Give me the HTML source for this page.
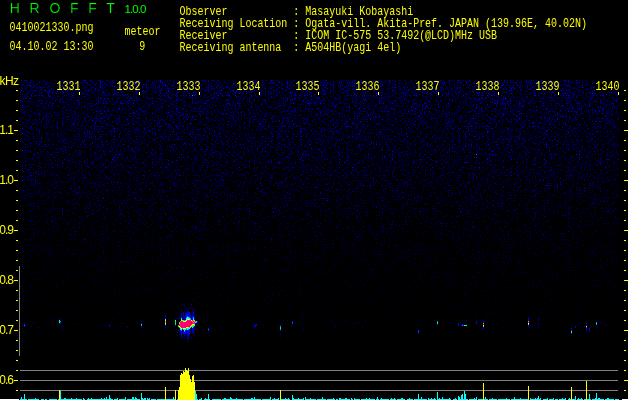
<!DOCTYPE html>
<html><head><meta charset="utf-8"><title>HROFFT 1.0.0</title>
<style>html,body{margin:0;padding:0;background:#000;overflow:hidden}svg{display:block}
.m{font-family:"Liberation Mono",monospace;font-size:13px;fill:#ff0;white-space:pre}
.s{font-family:"Liberation Sans",sans-serif;fill:#ff0}
</style></head>
<body>
<svg width="629" height="400" viewBox="0 0 629 400">
<rect width="629" height="400" fill="#000"/>
<defs><linearGradient id="dg" x1="0" y1="80" x2="0" y2="400" gradientUnits="userSpaceOnUse"><stop offset="0.0000" stop-color="rgb(125,125,125)"/><stop offset="0.1250" stop-color="rgb(120,120,120)"/><stop offset="0.3125" stop-color="rgb(111,111,111)"/><stop offset="0.4062" stop-color="rgb(104,104,104)"/><stop offset="0.5000" stop-color="rgb(95,95,95)"/><stop offset="0.5938" stop-color="rgb(88,88,88)"/><stop offset="0.6875" stop-color="rgb(80,80,80)"/><stop offset="0.7812" stop-color="rgb(73,73,73)"/><stop offset="0.8750" stop-color="rgb(51,51,51)"/></linearGradient>
<filter id="nz" x="0" y="0" width="100%" height="100%" filterUnits="objectBoundingBox" color-interpolation-filters="sRGB"><feTurbulence type="fractalNoise" baseFrequency="1.37 1.61" numOctaves="1" seed="5" result="t"/><feColorMatrix in="t" type="matrix" values="1 0 0 0 0  0 1 0 0 0  0 0 1 0 0  0 0 0 0 1" result="t1"/><feComposite in="t1" in2="SourceGraphic" operator="arithmetic" k1="0" k2="1" k3="1" k4="-1" result="v"/><feColorMatrix in="v" type="matrix" values="0 0 0 0 0  1 0 0 0 0  1 0 0 0 0  0 0 0 0 1"/><feComponentTransfer><feFuncR type="discrete" tableValues="0"/><feFuncG type="discrete" tableValues="0 0 0 0 0 0 0 0 0 0 0 0 0 0 0 0.5 0.5 1 1 1 1 1 1 1 1 1 1 1 1 1 1 1 1 1 1 1 1 1 1 1 1 1 1 1 1 1 1 1 1 1"/><feFuncB type="discrete" tableValues="0 0.22 0.22 0.22 0.3 0.3 0.4 0.5 0.62 0.75 0.88 1 1 1 1 1 1 1 1 1 1 1 1 1 1 1 1 1 1 1 1 1 1 1 1 1 1 1 1 1 1 1 1 1 1 1 1 1 1 1 1"/></feComponentTransfer></filter></defs>
<rect x="20" y="80" width="599" height="319" fill="url(#dg)" filter="url(#nz)"/>
<g shape-rendering="crispEdges">
<rect x="16" y="90" width="2" height="1" fill="#ffff00"/><rect x="624" y="90" width="2" height="1" fill="#ffff00"/><rect x="16" y="100" width="2" height="1" fill="#ffff00"/><rect x="624" y="100" width="2" height="1" fill="#ffff00"/><rect x="16" y="110" width="2" height="1" fill="#ffff00"/><rect x="624" y="110" width="2" height="1" fill="#ffff00"/><rect x="16" y="120" width="2" height="1" fill="#ffff00"/><rect x="624" y="120" width="2" height="1" fill="#ffff00"/><rect x="14" y="130" width="4" height="1" fill="#ffff00"/><rect x="624" y="130" width="5" height="1" fill="#ffff00"/><rect x="16" y="140" width="2" height="1" fill="#ffff00"/><rect x="624" y="140" width="2" height="1" fill="#ffff00"/><rect x="16" y="150" width="2" height="1" fill="#ffff00"/><rect x="624" y="150" width="2" height="1" fill="#ffff00"/><rect x="16" y="160" width="2" height="1" fill="#ffff00"/><rect x="624" y="160" width="2" height="1" fill="#ffff00"/><rect x="16" y="170" width="2" height="1" fill="#ffff00"/><rect x="624" y="170" width="2" height="1" fill="#ffff00"/><rect x="14" y="180" width="4" height="1" fill="#ffff00"/><rect x="624" y="180" width="5" height="1" fill="#ffff00"/><rect x="16" y="190" width="2" height="1" fill="#ffff00"/><rect x="624" y="190" width="2" height="1" fill="#ffff00"/><rect x="16" y="200" width="2" height="1" fill="#ffff00"/><rect x="624" y="200" width="2" height="1" fill="#ffff00"/><rect x="16" y="210" width="2" height="1" fill="#ffff00"/><rect x="624" y="210" width="2" height="1" fill="#ffff00"/><rect x="16" y="220" width="2" height="1" fill="#ffff00"/><rect x="624" y="220" width="2" height="1" fill="#ffff00"/><rect x="14" y="230" width="4" height="1" fill="#ffff00"/><rect x="624" y="230" width="5" height="1" fill="#ffff00"/><rect x="16" y="240" width="2" height="1" fill="#ffff00"/><rect x="624" y="240" width="2" height="1" fill="#ffff00"/><rect x="16" y="250" width="2" height="1" fill="#ffff00"/><rect x="624" y="250" width="2" height="1" fill="#ffff00"/><rect x="16" y="260" width="2" height="1" fill="#ffff00"/><rect x="624" y="260" width="2" height="1" fill="#ffff00"/><rect x="16" y="270" width="2" height="1" fill="#ffff00"/><rect x="624" y="270" width="2" height="1" fill="#ffff00"/><rect x="14" y="280" width="4" height="1" fill="#ffff00"/><rect x="624" y="280" width="5" height="1" fill="#ffff00"/><rect x="16" y="290" width="2" height="1" fill="#ffff00"/><rect x="624" y="290" width="2" height="1" fill="#ffff00"/><rect x="16" y="300" width="2" height="1" fill="#ffff00"/><rect x="624" y="300" width="2" height="1" fill="#ffff00"/><rect x="16" y="310" width="2" height="1" fill="#ffff00"/><rect x="624" y="310" width="2" height="1" fill="#ffff00"/><rect x="16" y="320" width="2" height="1" fill="#ffff00"/><rect x="624" y="320" width="2" height="1" fill="#ffff00"/><rect x="14" y="330" width="4" height="1" fill="#ffff00"/><rect x="624" y="330" width="5" height="1" fill="#ffff00"/><rect x="16" y="340" width="2" height="1" fill="#ffff00"/><rect x="624" y="340" width="2" height="1" fill="#ffff00"/><rect x="16" y="350" width="2" height="1" fill="#ffff00"/><rect x="624" y="350" width="2" height="1" fill="#ffff00"/><rect x="16" y="360" width="2" height="1" fill="#ffff00"/><rect x="624" y="360" width="2" height="1" fill="#ffff00"/><rect x="16" y="370" width="2" height="1" fill="#ffff00"/><rect x="624" y="370" width="2" height="1" fill="#ffff00"/><rect x="14" y="380" width="4" height="1" fill="#ffff00"/><rect x="624" y="380" width="5" height="1" fill="#ffff00"/><rect x="16" y="390" width="2" height="1" fill="#ffff00"/><rect x="624" y="390" width="2" height="1" fill="#ffff00"/>
<rect x="595" y="80" width="24" height="11" fill="#000"/><rect x="79" y="92" width="1" height="3" fill="#ffff00"/><rect x="139" y="92" width="1" height="3" fill="#ffff00"/><rect x="199" y="92" width="1" height="3" fill="#ffff00"/><rect x="259" y="92" width="1" height="3" fill="#ffff00"/><rect x="318" y="92" width="1" height="3" fill="#ffff00"/><rect x="378" y="92" width="1" height="3" fill="#ffff00"/><rect x="438" y="92" width="1" height="3" fill="#ffff00"/><rect x="498" y="92" width="1" height="3" fill="#ffff00"/><rect x="558" y="92" width="1" height="3" fill="#ffff00"/><rect x="618" y="92" width="1" height="3" fill="#ffff00"/>
<rect x="20" y="370" width="598" height="1" fill="#808080"/><rect x="20" y="380" width="598" height="1" fill="#808080"/><rect x="20" y="390" width="598" height="1" fill="#808080"/><rect x="19" y="266" width="1" height="90" fill="#808080"/><rect x="0" y="399" width="19" height="1" fill="#fff"/><rect x="622" y="399" width="7" height="1" fill="#fff"/><rect x="628" y="0" width="1" height="400" fill="#fff"/>
</g>
<g shape-rendering="crispEdges">
<rect x="20" y="399" width="7" height="1" fill="#00ffff"/><rect x="28" y="399" width="8" height="1" fill="#00ffff"/><rect x="36" y="399" width="3" height="1" fill="#00ffff"/><rect x="41" y="399" width="3" height="1" fill="#00ffff"/><rect x="45" y="399" width="2" height="1" fill="#00ffff"/><rect x="49" y="399" width="5" height="1" fill="#00ffff"/><rect x="54" y="399" width="3" height="1" fill="#00ffff"/><rect x="58" y="399" width="8" height="1" fill="#00ffff"/><rect x="66" y="399" width="5" height="1" fill="#00ffff"/><rect x="71" y="399" width="8" height="1" fill="#00ffff"/><rect x="79" y="399" width="3" height="1" fill="#00ffff"/><rect x="83" y="399" width="2" height="1" fill="#00ffff"/><rect x="87" y="399" width="8" height="1" fill="#00ffff"/><rect x="95" y="399" width="5" height="1" fill="#00ffff"/><rect x="100" y="399" width="4" height="1" fill="#00ffff"/><rect x="105" y="399" width="8" height="1" fill="#00ffff"/><rect x="114" y="399" width="3" height="1" fill="#00ffff"/><rect x="119" y="399" width="6" height="1" fill="#00ffff"/><rect x="127" y="399" width="4" height="1" fill="#00ffff"/><rect x="131" y="399" width="5" height="1" fill="#00ffff"/><rect x="137" y="399" width="3" height="1" fill="#00ffff"/><rect x="142" y="399" width="3" height="1" fill="#00ffff"/><rect x="147" y="399" width="2" height="1" fill="#00ffff"/><rect x="151" y="399" width="5" height="1" fill="#00ffff"/><rect x="157" y="399" width="8" height="1" fill="#00ffff"/><rect x="166" y="399" width="9" height="1" fill="#00ffff"/><rect x="177" y="399" width="9" height="1" fill="#00ffff"/><rect x="187" y="399" width="6" height="1" fill="#00ffff"/><rect x="194" y="399" width="4" height="1" fill="#00ffff"/><rect x="199" y="399" width="3" height="1" fill="#00ffff"/><rect x="204" y="399" width="6" height="1" fill="#00ffff"/><rect x="212" y="399" width="9" height="1" fill="#00ffff"/><rect x="222" y="399" width="9" height="1" fill="#00ffff"/><rect x="232" y="399" width="3" height="1" fill="#00ffff"/><rect x="235" y="399" width="8" height="1" fill="#00ffff"/><rect x="244" y="399" width="7" height="1" fill="#00ffff"/><rect x="252" y="399" width="9" height="1" fill="#00ffff"/><rect x="262" y="399" width="2" height="1" fill="#00ffff"/><rect x="264" y="399" width="7" height="1" fill="#00ffff"/><rect x="272" y="399" width="7" height="1" fill="#00ffff"/><rect x="281" y="399" width="9" height="1" fill="#00ffff"/><rect x="292" y="399" width="9" height="1" fill="#00ffff"/><rect x="301" y="399" width="3" height="1" fill="#00ffff"/><rect x="305" y="399" width="9" height="1" fill="#00ffff"/><rect x="314" y="399" width="2" height="1" fill="#00ffff"/><rect x="317" y="399" width="9" height="1" fill="#00ffff"/><rect x="327" y="399" width="8" height="1" fill="#00ffff"/><rect x="336" y="399" width="2" height="1" fill="#00ffff"/><rect x="339" y="399" width="7" height="1" fill="#00ffff"/><rect x="347" y="399" width="3" height="1" fill="#00ffff"/><rect x="351" y="399" width="2" height="1" fill="#00ffff"/><rect x="354" y="399" width="6" height="1" fill="#00ffff"/><rect x="361" y="399" width="5" height="1" fill="#00ffff"/><rect x="367" y="399" width="8" height="1" fill="#00ffff"/><rect x="376" y="399" width="3" height="1" fill="#00ffff"/><rect x="380" y="399" width="9" height="1" fill="#00ffff"/><rect x="390" y="399" width="6" height="1" fill="#00ffff"/><rect x="397" y="399" width="8" height="1" fill="#00ffff"/><rect x="407" y="399" width="6" height="1" fill="#00ffff"/><rect x="414" y="399" width="7" height="1" fill="#00ffff"/><rect x="422" y="399" width="5" height="1" fill="#00ffff"/><rect x="428" y="399" width="3" height="1" fill="#00ffff"/><rect x="432" y="399" width="4" height="1" fill="#00ffff"/><rect x="437" y="399" width="5" height="1" fill="#00ffff"/><rect x="442" y="399" width="9" height="1" fill="#00ffff"/><rect x="453" y="399" width="4" height="1" fill="#00ffff"/><rect x="458" y="399" width="6" height="1" fill="#00ffff"/><rect x="464" y="399" width="4" height="1" fill="#00ffff"/><rect x="469" y="399" width="7" height="1" fill="#00ffff"/><rect x="478" y="399" width="7" height="1" fill="#00ffff"/><rect x="486" y="399" width="2" height="1" fill="#00ffff"/><rect x="489" y="399" width="8" height="1" fill="#00ffff"/><rect x="498" y="399" width="8" height="1" fill="#00ffff"/><rect x="507" y="399" width="3" height="1" fill="#00ffff"/><rect x="511" y="399" width="8" height="1" fill="#00ffff"/><rect x="519" y="399" width="5" height="1" fill="#00ffff"/><rect x="524" y="399" width="5" height="1" fill="#00ffff"/><rect x="530" y="399" width="4" height="1" fill="#00ffff"/><rect x="534" y="399" width="7" height="1" fill="#00ffff"/><rect x="543" y="399" width="2" height="1" fill="#00ffff"/><rect x="545" y="399" width="2" height="1" fill="#00ffff"/><rect x="549" y="399" width="4" height="1" fill="#00ffff"/><rect x="555" y="399" width="3" height="1" fill="#00ffff"/><rect x="559" y="399" width="2" height="1" fill="#00ffff"/><rect x="561" y="399" width="5" height="1" fill="#00ffff"/><rect x="568" y="399" width="8" height="1" fill="#00ffff"/><rect x="577" y="399" width="6" height="1" fill="#00ffff"/><rect x="584" y="399" width="7" height="1" fill="#00ffff"/><rect x="592" y="399" width="3" height="1" fill="#00ffff"/><rect x="595" y="399" width="9" height="1" fill="#00ffff"/><rect x="605" y="399" width="9" height="1" fill="#00ffff"/><rect x="615" y="399" width="4" height="1" fill="#00ffff"/>
<rect x="21" y="397" width="1" height="3" fill="#00ffff"/><rect x="35" y="398" width="1" height="2" fill="#00ffff"/><rect x="64" y="398" width="1" height="2" fill="#00ffff"/><rect x="65" y="398" width="1" height="2" fill="#00ffff"/><rect x="71" y="398" width="1" height="2" fill="#00ffff"/><rect x="76" y="398" width="1" height="2" fill="#00ffff"/><rect x="83" y="398" width="1" height="2" fill="#00ffff"/><rect x="88" y="398" width="1" height="2" fill="#00ffff"/><rect x="91" y="398" width="1" height="2" fill="#00ffff"/><rect x="101" y="398" width="1" height="2" fill="#00ffff"/><rect x="104" y="398" width="1" height="2" fill="#00ffff"/><rect x="106" y="397" width="1" height="3" fill="#00ffff"/><rect x="110" y="398" width="1" height="2" fill="#00ffff"/><rect x="117" y="398" width="1" height="2" fill="#00ffff"/><rect x="125" y="397" width="1" height="3" fill="#00ffff"/><rect x="132" y="397" width="1" height="3" fill="#00ffff"/><rect x="133" y="397" width="1" height="3" fill="#00ffff"/><rect x="135" y="397" width="1" height="3" fill="#00ffff"/><rect x="136" y="398" width="1" height="2" fill="#00ffff"/><rect x="142" y="398" width="1" height="2" fill="#00ffff"/><rect x="144" y="398" width="1" height="2" fill="#00ffff"/><rect x="145" y="398" width="1" height="2" fill="#00ffff"/><rect x="147" y="398" width="1" height="2" fill="#00ffff"/><rect x="149" y="398" width="1" height="2" fill="#00ffff"/><rect x="173" y="397" width="1" height="3" fill="#00ffff"/><rect x="179" y="397" width="1" height="3" fill="#00ffff"/><rect x="182" y="398" width="1" height="2" fill="#00ffff"/><rect x="192" y="398" width="1" height="2" fill="#00ffff"/><rect x="201" y="398" width="1" height="2" fill="#00ffff"/><rect x="205" y="398" width="1" height="2" fill="#00ffff"/><rect x="224" y="398" width="1" height="2" fill="#00ffff"/><rect x="225" y="398" width="1" height="2" fill="#00ffff"/><rect x="230" y="397" width="1" height="3" fill="#00ffff"/><rect x="231" y="398" width="1" height="2" fill="#00ffff"/><rect x="236" y="398" width="1" height="2" fill="#00ffff"/><rect x="251" y="398" width="1" height="2" fill="#00ffff"/><rect x="252" y="398" width="1" height="2" fill="#00ffff"/><rect x="270" y="397" width="1" height="3" fill="#00ffff"/><rect x="274" y="398" width="1" height="2" fill="#00ffff"/><rect x="278" y="398" width="1" height="2" fill="#00ffff"/><rect x="285" y="398" width="1" height="2" fill="#00ffff"/><rect x="288" y="398" width="1" height="2" fill="#00ffff"/><rect x="293" y="398" width="1" height="2" fill="#00ffff"/><rect x="298" y="398" width="1" height="2" fill="#00ffff"/><rect x="303" y="398" width="1" height="2" fill="#00ffff"/><rect x="305" y="397" width="1" height="3" fill="#00ffff"/><rect x="310" y="398" width="1" height="2" fill="#00ffff"/><rect x="322" y="397" width="1" height="3" fill="#00ffff"/><rect x="333" y="398" width="1" height="2" fill="#00ffff"/><rect x="339" y="398" width="1" height="2" fill="#00ffff"/><rect x="340" y="398" width="1" height="2" fill="#00ffff"/><rect x="345" y="398" width="1" height="2" fill="#00ffff"/><rect x="346" y="398" width="1" height="2" fill="#00ffff"/><rect x="351" y="398" width="1" height="2" fill="#00ffff"/><rect x="354" y="398" width="1" height="2" fill="#00ffff"/><rect x="366" y="398" width="1" height="2" fill="#00ffff"/><rect x="369" y="398" width="1" height="2" fill="#00ffff"/><rect x="377" y="397" width="1" height="3" fill="#00ffff"/><rect x="381" y="398" width="1" height="2" fill="#00ffff"/><rect x="391" y="398" width="1" height="2" fill="#00ffff"/><rect x="394" y="398" width="1" height="2" fill="#00ffff"/><rect x="401" y="398" width="1" height="2" fill="#00ffff"/><rect x="402" y="398" width="1" height="2" fill="#00ffff"/><rect x="409" y="398" width="1" height="2" fill="#00ffff"/><rect x="421" y="397" width="1" height="3" fill="#00ffff"/><rect x="428" y="398" width="1" height="2" fill="#00ffff"/><rect x="431" y="398" width="1" height="2" fill="#00ffff"/><rect x="434" y="398" width="1" height="2" fill="#00ffff"/><rect x="439" y="398" width="1" height="2" fill="#00ffff"/><rect x="442" y="397" width="1" height="3" fill="#00ffff"/><rect x="449" y="398" width="1" height="2" fill="#00ffff"/><rect x="455" y="398" width="1" height="2" fill="#00ffff"/><rect x="459" y="397" width="1" height="3" fill="#00ffff"/><rect x="474" y="398" width="1" height="2" fill="#00ffff"/><rect x="476" y="398" width="1" height="2" fill="#00ffff"/><rect x="492" y="398" width="1" height="2" fill="#00ffff"/><rect x="506" y="398" width="1" height="2" fill="#00ffff"/><rect x="514" y="397" width="1" height="3" fill="#00ffff"/><rect x="520" y="398" width="1" height="2" fill="#00ffff"/><rect x="530" y="398" width="1" height="2" fill="#00ffff"/><rect x="535" y="398" width="1" height="2" fill="#00ffff"/><rect x="537" y="398" width="1" height="2" fill="#00ffff"/><rect x="538" y="397" width="1" height="3" fill="#00ffff"/><rect x="540" y="398" width="1" height="2" fill="#00ffff"/><rect x="547" y="398" width="1" height="2" fill="#00ffff"/><rect x="553" y="398" width="1" height="2" fill="#00ffff"/><rect x="562" y="398" width="1" height="2" fill="#00ffff"/><rect x="565" y="398" width="1" height="2" fill="#00ffff"/><rect x="569" y="398" width="1" height="2" fill="#00ffff"/><rect x="578" y="398" width="1" height="2" fill="#00ffff"/><rect x="581" y="398" width="1" height="2" fill="#00ffff"/><rect x="589" y="398" width="1" height="2" fill="#00ffff"/><rect x="595" y="398" width="1" height="2" fill="#00ffff"/><rect x="598" y="398" width="1" height="2" fill="#00ffff"/><rect x="599" y="398" width="1" height="2" fill="#00ffff"/><rect x="607" y="398" width="1" height="2" fill="#00ffff"/><rect x="608" y="398" width="1" height="2" fill="#00ffff"/>
<rect x="24" y="394" width="1" height="6" fill="#00ffff"/><rect x="60" y="391" width="1" height="9" fill="#00ffff"/><rect x="109" y="395" width="1" height="5" fill="#00ffff"/><rect x="141" y="393" width="1" height="7" fill="#00ffff"/><rect x="195" y="391" width="1" height="9" fill="#00ffff"/><rect x="196" y="394" width="1" height="6" fill="#00ffff"/><rect x="208" y="394" width="1" height="6" fill="#00ffff"/><rect x="254" y="397" width="1" height="3" fill="#00ffff"/><rect x="292" y="395" width="1" height="5" fill="#00ffff"/><rect x="418" y="394" width="1" height="6" fill="#00ffff"/><rect x="437" y="392" width="1" height="8" fill="#00ffff"/><rect x="458" y="396" width="1" height="4" fill="#00ffff"/><rect x="461" y="395" width="1" height="5" fill="#00ffff"/><rect x="462" y="394" width="1" height="6" fill="#00ffff"/><rect x="464" y="391" width="1" height="9" fill="#00ffff"/><rect x="465" y="394" width="1" height="6" fill="#00ffff"/><rect x="476" y="397" width="1" height="3" fill="#00ffff"/><rect x="485" y="397" width="1" height="3" fill="#00ffff"/><rect x="538" y="396" width="1" height="4" fill="#00ffff"/><rect x="575" y="396" width="1" height="4" fill="#00ffff"/><rect x="589" y="394" width="1" height="6" fill="#00ffff"/><rect x="596" y="393" width="1" height="7" fill="#00ffff"/>
<rect x="59" y="390" width="1" height="10" fill="#ffff00"/><rect x="165" y="387" width="1" height="13" fill="#ffff00"/><rect x="175" y="390" width="1" height="10" fill="#ffff00"/><rect x="280" y="390" width="1" height="10" fill="#ffff00"/><rect x="483" y="383" width="1" height="17" fill="#ffff00"/><rect x="528" y="386" width="1" height="14" fill="#ffff00"/><rect x="571" y="387" width="1" height="13" fill="#ffff00"/><rect x="586" y="381" width="1" height="19" fill="#ffff00"/><rect x="178" y="390" width="1" height="10" fill="#ffff00"/><rect x="179" y="387" width="1" height="13" fill="#ffff00"/><rect x="180" y="375" width="1" height="25" fill="#ffff00"/><rect x="181" y="373" width="1" height="27" fill="#ffff00"/><rect x="182" y="374" width="1" height="26" fill="#ffff00"/><rect x="183" y="371" width="1" height="29" fill="#ffff00"/><rect x="184" y="372" width="1" height="28" fill="#ffff00"/><rect x="185" y="368" width="1" height="32" fill="#ffff00"/><rect x="186" y="370" width="1" height="30" fill="#ffff00"/><rect x="187" y="371" width="1" height="29" fill="#ffff00"/><rect x="188" y="368" width="1" height="32" fill="#ffff00"/><rect x="189" y="375" width="1" height="25" fill="#ffff00"/><rect x="190" y="379" width="1" height="21" fill="#ffff00"/><rect x="191" y="382" width="1" height="18" fill="#ffff00"/><rect x="192" y="376" width="1" height="24" fill="#ffff00"/><rect x="193" y="375" width="1" height="25" fill="#ffff00"/><rect x="194" y="382" width="1" height="18" fill="#ffff00"/>
</g>
<g shape-rendering="crispEdges">
<rect x="22" y="322" width="1" height="1" fill="#00006e"/><rect x="24" y="323" width="1" height="1" fill="#00006e"/><rect x="24" y="324" width="1" height="1" fill="#0000ff"/><rect x="24" y="325" width="1" height="1" fill="#0080ff"/><rect x="24" y="326" width="1" height="1" fill="#0000b4"/><rect x="26" y="325" width="1" height="1" fill="#00006e"/><rect x="34" y="323" width="1" height="1" fill="#00006e"/><rect x="38" y="327" width="1" height="1" fill="#00006e"/><rect x="46" y="323" width="1" height="1" fill="#00006e"/><rect x="49" y="326" width="1" height="1" fill="#00006e"/><rect x="56" y="325" width="1" height="1" fill="#00006e"/><rect x="59" y="318" width="1" height="1" fill="#00006e"/><rect x="59" y="319" width="1" height="1" fill="#0000b4"/><rect x="59" y="320" width="1" height="1" fill="#00ff80"/><rect x="59" y="321" width="1" height="1" fill="#00ff00"/><rect x="59" y="322" width="1" height="1" fill="#00ffff"/><rect x="59" y="323" width="1" height="1" fill="#0000ff"/><rect x="60" y="321" width="1" height="1" fill="#0080ff"/><rect x="60" y="322" width="1" height="1" fill="#0000ff"/><rect x="60" y="323" width="1" height="1" fill="#0000b4"/><rect x="60" y="324" width="1" height="1" fill="#00006e"/><rect x="61" y="329" width="1" height="1" fill="#00006e"/><rect x="62" y="328" width="1" height="1" fill="#00006e"/><rect x="74" y="324" width="1" height="1" fill="#00006e"/><rect x="77" y="323" width="1" height="1" fill="#00006e"/><rect x="101" y="327" width="1" height="1" fill="#00006e"/><rect x="105" y="325" width="1" height="1" fill="#00006e"/><rect x="109" y="324" width="1" height="1" fill="#0000b4"/><rect x="109" y="325" width="1" height="1" fill="#0000ff"/><rect x="109" y="326" width="1" height="1" fill="#0000b4"/><rect x="117" y="326" width="1" height="1" fill="#00006e"/><rect x="120" y="326" width="1" height="1" fill="#00006e"/><rect x="123" y="323" width="1" height="1" fill="#00006e"/><rect x="126" y="326" width="1" height="1" fill="#00006e"/><rect x="127" y="327" width="1" height="1" fill="#00006e"/><rect x="141" y="322" width="1" height="1" fill="#00006e"/><rect x="141" y="323" width="1" height="1" fill="#0000ff"/><rect x="141" y="324" width="1" height="1" fill="#00ffff"/><rect x="141" y="325" width="1" height="1" fill="#0080ff"/><rect x="141" y="326" width="1" height="1" fill="#0000ff"/><rect x="141" y="327" width="1" height="1" fill="#00006e"/><rect x="147" y="328" width="1" height="1" fill="#00006e"/><rect x="161" y="325" width="1" height="1" fill="#00006e"/><rect x="164" y="323" width="1" height="1" fill="#00006e"/><rect x="165" y="315" width="1" height="1" fill="#00006e"/><rect x="165" y="316" width="1" height="1" fill="#0000b4"/><rect x="165" y="317" width="1" height="2" fill="#0000ff"/><rect x="165" y="319" width="1" height="1" fill="#00ffff"/><rect x="165" y="320" width="1" height="1" fill="#a0ff00"/><rect x="165" y="321" width="1" height="2" fill="#ff8c00"/><rect x="165" y="323" width="1" height="1" fill="#ffff00"/><rect x="165" y="324" width="1" height="1" fill="#00ffff"/><rect x="165" y="325" width="1" height="1" fill="#0000ff"/><rect x="165" y="326" width="1" height="1" fill="#0000b4"/><rect x="173" y="326" width="1" height="1" fill="#00006e"/><rect x="175" y="319" width="1" height="1" fill="#0000b4"/><rect x="175" y="320" width="1" height="1" fill="#00ffff"/><rect x="175" y="321" width="1" height="1" fill="#00ff80"/><rect x="175" y="322" width="1" height="2" fill="#00ff00"/><rect x="175" y="324" width="1" height="1" fill="#00ff80"/><rect x="175" y="325" width="1" height="1" fill="#0000ff"/><rect x="175" y="326" width="1" height="1" fill="#00006e"/><rect x="176" y="322" width="1" height="1" fill="#00006e"/><rect x="177" y="316" width="1" height="1" fill="#00006e"/><rect x="177" y="318" width="1" height="1" fill="#0000b4"/><rect x="177" y="332" width="1" height="1" fill="#00006e"/><rect x="178" y="325" width="1" height="1" fill="#00ff00"/><rect x="178" y="326" width="1" height="1" fill="#00ff80"/><rect x="178" y="330" width="1" height="1" fill="#0000b4"/><rect x="179" y="317" width="1" height="1" fill="#0000b4"/><rect x="179" y="322" width="1" height="1" fill="#00ff00"/><rect x="179" y="323" width="1" height="1" fill="#a0ff00"/><rect x="179" y="324" width="1" height="2" fill="#fd0078"/><rect x="179" y="326" width="1" height="1" fill="#ffff00"/><rect x="179" y="327" width="1" height="1" fill="#00ff00"/><rect x="179" y="328" width="1" height="1" fill="#00006e"/><rect x="180" y="321" width="1" height="1" fill="#00ff00"/><rect x="180" y="322" width="1" height="5" fill="#fd0078"/><rect x="180" y="327" width="1" height="1" fill="#ffff00"/><rect x="180" y="328" width="1" height="2" fill="#00ffff"/><rect x="180" y="330" width="1" height="1" fill="#0000ff"/><rect x="180" y="331" width="1" height="2" fill="#0000b4"/><rect x="180" y="333" width="1" height="1" fill="#00006e"/><rect x="181" y="309" width="1" height="6" fill="#00006e"/><rect x="181" y="315" width="1" height="3" fill="#0000ff"/><rect x="181" y="318" width="1" height="2" fill="#00ffff"/><rect x="181" y="320" width="1" height="1" fill="#ffff00"/><rect x="181" y="321" width="1" height="7" fill="#fd0078"/><rect x="181" y="328" width="1" height="1" fill="#ffff00"/><rect x="181" y="329" width="1" height="1" fill="#00ffff"/><rect x="181" y="330" width="1" height="1" fill="#0080ff"/><rect x="181" y="331" width="1" height="6" fill="#0000ff"/><rect x="181" y="337" width="1" height="1" fill="#00006e"/><rect x="181" y="339" width="1" height="1" fill="#00006e"/><rect x="182" y="304" width="1" height="1" fill="#0000b4"/><rect x="182" y="313" width="1" height="1" fill="#0000b4"/><rect x="182" y="317" width="1" height="2" fill="#00006e"/><rect x="182" y="319" width="1" height="1" fill="#0000ff"/><rect x="182" y="320" width="1" height="1" fill="#a0ff00"/><rect x="182" y="321" width="1" height="7" fill="#fd0078"/><rect x="182" y="328" width="1" height="1" fill="#00ff00"/><rect x="182" y="329" width="1" height="1" fill="#0000ff"/><rect x="182" y="332" width="1" height="1" fill="#00006e"/><rect x="182" y="346" width="1" height="1" fill="#00006e"/><rect x="183" y="312" width="1" height="1" fill="#00006e"/><rect x="183" y="313" width="1" height="1" fill="#0000b4"/><rect x="183" y="314" width="1" height="1" fill="#00006e"/><rect x="183" y="315" width="1" height="1" fill="#0000b4"/><rect x="183" y="316" width="1" height="1" fill="#00006e"/><rect x="183" y="317" width="1" height="2" fill="#0000b4"/><rect x="183" y="319" width="1" height="1" fill="#00006e"/><rect x="183" y="320" width="1" height="1" fill="#00ff80"/><rect x="183" y="321" width="1" height="1" fill="#ffff00"/><rect x="183" y="322" width="1" height="6" fill="#fd0078"/><rect x="183" y="328" width="1" height="1" fill="#ffff00"/><rect x="183" y="329" width="1" height="1" fill="#00ff80"/><rect x="183" y="330" width="1" height="4" fill="#0000ff"/><rect x="183" y="334" width="1" height="1" fill="#00006e"/><rect x="183" y="336" width="1" height="1" fill="#00006e"/><rect x="183" y="338" width="1" height="1" fill="#00006e"/><rect x="184" y="305" width="1" height="1" fill="#0000b4"/><rect x="184" y="316" width="1" height="4" fill="#00006e"/><rect x="184" y="320" width="1" height="1" fill="#0080ff"/><rect x="184" y="321" width="1" height="1" fill="#ffff00"/><rect x="184" y="322" width="1" height="6" fill="#fd0078"/><rect x="184" y="328" width="1" height="1" fill="#ffff00"/><rect x="184" y="329" width="1" height="2" fill="#00ffff"/><rect x="184" y="331" width="1" height="1" fill="#0080ff"/><rect x="184" y="332" width="1" height="2" fill="#0000b4"/><rect x="184" y="334" width="1" height="1" fill="#00006e"/><rect x="184" y="335" width="1" height="1" fill="#0000b4"/><rect x="184" y="337" width="1" height="1" fill="#0000b4"/><rect x="185" y="303" width="1" height="1" fill="#00006e"/><rect x="185" y="311" width="1" height="1" fill="#0000b4"/><rect x="185" y="312" width="1" height="1" fill="#00006e"/><rect x="185" y="313" width="1" height="1" fill="#0000b4"/><rect x="185" y="314" width="1" height="1" fill="#00006e"/><rect x="185" y="315" width="1" height="1" fill="#0000b4"/><rect x="185" y="316" width="1" height="4" fill="#0000ff"/><rect x="185" y="320" width="1" height="1" fill="#00ffff"/><rect x="185" y="321" width="1" height="1" fill="#ffff00"/><rect x="185" y="322" width="1" height="6" fill="#fd0078"/><rect x="185" y="328" width="1" height="1" fill="#a0ff00"/><rect x="185" y="329" width="1" height="1" fill="#00ffff"/><rect x="185" y="330" width="1" height="4" fill="#0000ff"/><rect x="185" y="334" width="1" height="1" fill="#00006e"/><rect x="186" y="307" width="1" height="1" fill="#00006e"/><rect x="186" y="312" width="1" height="1" fill="#00006e"/><rect x="186" y="313" width="1" height="4" fill="#0000ff"/><rect x="186" y="317" width="1" height="1" fill="#0080ff"/><rect x="186" y="318" width="1" height="2" fill="#00ffff"/><rect x="186" y="320" width="1" height="1" fill="#ffff00"/><rect x="186" y="321" width="1" height="6" fill="#fd0078"/><rect x="186" y="327" width="1" height="1" fill="#ffff00"/><rect x="186" y="328" width="1" height="1" fill="#00ff00"/><rect x="186" y="329" width="1" height="1" fill="#0080ff"/><rect x="186" y="330" width="1" height="3" fill="#0000b4"/><rect x="186" y="333" width="1" height="1" fill="#00006e"/><rect x="187" y="308" width="1" height="5" fill="#00006e"/><rect x="187" y="313" width="1" height="3" fill="#0000ff"/><rect x="187" y="316" width="1" height="1" fill="#0080ff"/><rect x="187" y="317" width="1" height="2" fill="#00ffff"/><rect x="187" y="319" width="1" height="1" fill="#ffff00"/><rect x="187" y="320" width="1" height="7" fill="#fd0078"/><rect x="187" y="327" width="1" height="1" fill="#ffff00"/><rect x="187" y="328" width="1" height="2" fill="#00ffff"/><rect x="187" y="330" width="1" height="4" fill="#0000ff"/><rect x="187" y="334" width="1" height="1" fill="#00006e"/><rect x="187" y="335" width="1" height="2" fill="#0000b4"/><rect x="187" y="337" width="1" height="3" fill="#00006e"/><rect x="188" y="311" width="1" height="5" fill="#0000b4"/><rect x="188" y="316" width="1" height="1" fill="#0000ff"/><rect x="188" y="317" width="1" height="2" fill="#00ffff"/><rect x="188" y="319" width="1" height="1" fill="#ffff00"/><rect x="188" y="320" width="1" height="7" fill="#fd0078"/><rect x="188" y="327" width="1" height="1" fill="#a0ff00"/><rect x="188" y="328" width="1" height="1" fill="#00ffff"/><rect x="188" y="329" width="1" height="1" fill="#0080ff"/><rect x="188" y="330" width="1" height="6" fill="#0000ff"/><rect x="188" y="336" width="1" height="4" fill="#00006e"/><rect x="188" y="341" width="1" height="1" fill="#00006e"/><rect x="189" y="307" width="1" height="2" fill="#00006e"/><rect x="189" y="312" width="1" height="5" fill="#0000ff"/><rect x="189" y="317" width="1" height="1" fill="#0080ff"/><rect x="189" y="318" width="1" height="1" fill="#00ffff"/><rect x="189" y="319" width="1" height="1" fill="#a0ff00"/><rect x="189" y="320" width="1" height="7" fill="#fd0078"/><rect x="189" y="327" width="1" height="1" fill="#00ff00"/><rect x="189" y="328" width="1" height="1" fill="#00ffff"/><rect x="189" y="329" width="1" height="1" fill="#0000ff"/><rect x="189" y="330" width="1" height="5" fill="#0000b4"/><rect x="190" y="313" width="1" height="2" fill="#00006e"/><rect x="190" y="315" width="1" height="3" fill="#0000b4"/><rect x="190" y="318" width="1" height="1" fill="#0080ff"/><rect x="190" y="319" width="1" height="1" fill="#00ff00"/><rect x="190" y="320" width="1" height="2" fill="#fd0078"/><rect x="190" y="322" width="1" height="1" fill="#ff0000"/><rect x="190" y="323" width="1" height="3" fill="#fd0078"/><rect x="190" y="326" width="1" height="1" fill="#ffff00"/><rect x="190" y="327" width="1" height="1" fill="#00ffff"/><rect x="190" y="328" width="1" height="1" fill="#0000ff"/><rect x="190" y="329" width="1" height="3" fill="#00006e"/><rect x="191" y="304" width="1" height="1" fill="#0000b4"/><rect x="191" y="313" width="1" height="1" fill="#00006e"/><rect x="191" y="316" width="1" height="3" fill="#00006e"/><rect x="191" y="319" width="1" height="1" fill="#0000ff"/><rect x="191" y="320" width="1" height="1" fill="#ffff00"/><rect x="191" y="321" width="1" height="1" fill="#fd0078"/><rect x="191" y="322" width="1" height="1" fill="#ff0000"/><rect x="191" y="323" width="1" height="2" fill="#fd0078"/><rect x="191" y="325" width="1" height="1" fill="#ffff00"/><rect x="191" y="326" width="1" height="1" fill="#00ff00"/><rect x="191" y="327" width="1" height="1" fill="#0000b4"/><rect x="191" y="337" width="1" height="1" fill="#0000b4"/><rect x="192" y="310" width="1" height="4" fill="#00006e"/><rect x="192" y="315" width="1" height="1" fill="#00006e"/><rect x="192" y="316" width="1" height="4" fill="#0000ff"/><rect x="192" y="320" width="1" height="1" fill="#0080ff"/><rect x="192" y="321" width="1" height="1" fill="#ff8c00"/><rect x="192" y="322" width="1" height="2" fill="#fd0078"/><rect x="192" y="324" width="1" height="1" fill="#ffff00"/><rect x="192" y="325" width="1" height="1" fill="#a0ff00"/><rect x="192" y="326" width="1" height="1" fill="#00ff00"/><rect x="192" y="327" width="1" height="1" fill="#00ffff"/><rect x="192" y="328" width="1" height="2" fill="#0000ff"/><rect x="192" y="330" width="1" height="4" fill="#00006e"/><rect x="192" y="336" width="1" height="1" fill="#00006e"/><rect x="192" y="345" width="1" height="1" fill="#00006e"/><rect x="193" y="300" width="1" height="1" fill="#0000b4"/><rect x="193" y="308" width="1" height="1" fill="#00006e"/><rect x="193" y="312" width="1" height="5" fill="#0000ff"/><rect x="193" y="317" width="1" height="1" fill="#0080ff"/><rect x="193" y="318" width="1" height="2" fill="#00ffff"/><rect x="193" y="320" width="1" height="1" fill="#ff8c00"/><rect x="193" y="321" width="1" height="1" fill="#ff0000"/><rect x="193" y="322" width="1" height="1" fill="#ff8c00"/><rect x="193" y="323" width="1" height="1" fill="#fd0078"/><rect x="193" y="324" width="1" height="1" fill="#ffff00"/><rect x="193" y="325" width="1" height="1" fill="#00ff00"/><rect x="193" y="326" width="1" height="1" fill="#00ffff"/><rect x="193" y="327" width="1" height="1" fill="#0000ff"/><rect x="193" y="328" width="1" height="4" fill="#0000b4"/><rect x="193" y="332" width="1" height="1" fill="#00006e"/><rect x="193" y="335" width="1" height="1" fill="#00006e"/><rect x="194" y="310" width="1" height="2" fill="#00006e"/><rect x="194" y="316" width="1" height="3" fill="#00006e"/><rect x="194" y="319" width="1" height="1" fill="#0000ff"/><rect x="194" y="320" width="1" height="1" fill="#a0ff00"/><rect x="194" y="321" width="1" height="1" fill="#ff8c00"/><rect x="194" y="322" width="1" height="2" fill="#fd0078"/><rect x="194" y="324" width="1" height="1" fill="#a0ff00"/><rect x="194" y="325" width="1" height="1" fill="#00ffff"/><rect x="194" y="326" width="1" height="1" fill="#0000ff"/><rect x="194" y="328" width="1" height="3" fill="#00006e"/><rect x="194" y="332" width="1" height="1" fill="#00006e"/><rect x="194" y="334" width="1" height="1" fill="#00006e"/><rect x="195" y="321" width="1" height="1" fill="#0080ff"/><rect x="195" y="322" width="1" height="1" fill="#00ffff"/><rect x="195" y="323" width="1" height="1" fill="#0000ff"/><rect x="196" y="315" width="1" height="1" fill="#00006e"/><rect x="196" y="321" width="1" height="1" fill="#00ffff"/><rect x="196" y="322" width="1" height="1" fill="#0080ff"/><rect x="197" y="321" width="1" height="1" fill="#0000ff"/><rect x="197" y="322" width="1" height="1" fill="#0000b4"/><rect x="197" y="328" width="1" height="1" fill="#00006e"/><rect x="208" y="327" width="1" height="1" fill="#00006e"/><rect x="208" y="328" width="1" height="1" fill="#0000ff"/><rect x="208" y="329" width="1" height="1" fill="#0080ff"/><rect x="208" y="330" width="1" height="1" fill="#0000ff"/><rect x="208" y="331" width="1" height="1" fill="#00006e"/><rect x="211" y="326" width="1" height="1" fill="#00006e"/><rect x="220" y="326" width="1" height="1" fill="#00006e"/><rect x="254" y="325" width="1" height="1" fill="#0000b4"/><rect x="254" y="326" width="1" height="1" fill="#0000ff"/><rect x="254" y="327" width="1" height="1" fill="#0000b4"/><rect x="254" y="328" width="1" height="1" fill="#00006e"/><rect x="255" y="324" width="1" height="1" fill="#00006e"/><rect x="255" y="325" width="1" height="1" fill="#0000ff"/><rect x="255" y="326" width="1" height="1" fill="#0000b4"/><rect x="256" y="324" width="1" height="1" fill="#0000ff"/><rect x="256" y="325" width="1" height="1" fill="#0000b4"/><rect x="263" y="325" width="1" height="1" fill="#00006e"/><rect x="280" y="324" width="1" height="1" fill="#00006e"/><rect x="280" y="325" width="1" height="1" fill="#0000ff"/><rect x="280" y="326" width="1" height="1" fill="#0080ff"/><rect x="280" y="327" width="1" height="1" fill="#00ff00"/><rect x="280" y="328" width="1" height="1" fill="#00ff80"/><rect x="280" y="329" width="1" height="1" fill="#0080ff"/><rect x="280" y="330" width="1" height="1" fill="#0000ff"/><rect x="280" y="331" width="1" height="1" fill="#00006e"/><rect x="280" y="334" width="1" height="1" fill="#00006e"/><rect x="280" y="337" width="1" height="1" fill="#00006e"/><rect x="287" y="320" width="1" height="1" fill="#00006e"/><rect x="292" y="321" width="1" height="1" fill="#0000b4"/><rect x="292" y="322" width="1" height="1" fill="#0080ff"/><rect x="292" y="323" width="1" height="1" fill="#0000ff"/><rect x="292" y="324" width="1" height="1" fill="#0000b4"/><rect x="296" y="322" width="1" height="1" fill="#00006e"/><rect x="299" y="324" width="1" height="1" fill="#00006e"/><rect x="303" y="328" width="1" height="1" fill="#00006e"/><rect x="327" y="323" width="1" height="1" fill="#00006e"/><rect x="334" y="324" width="1" height="1" fill="#00006e"/><rect x="335" y="326" width="1" height="1" fill="#00006e"/><rect x="336" y="323" width="1" height="1" fill="#00006e"/><rect x="346" y="321" width="1" height="1" fill="#00006e"/><rect x="356" y="323" width="1" height="1" fill="#00006e"/><rect x="359" y="322" width="1" height="1" fill="#00006e"/><rect x="362" y="327" width="1" height="1" fill="#00006e"/><rect x="365" y="321" width="1" height="1" fill="#00006e"/><rect x="379" y="324" width="1" height="1" fill="#00006e"/><rect x="392" y="323" width="1" height="1" fill="#00006e"/><rect x="402" y="328" width="1" height="1" fill="#00006e"/><rect x="418" y="329" width="1" height="1" fill="#00006e"/><rect x="418" y="330" width="1" height="1" fill="#0000ff"/><rect x="418" y="331" width="1" height="1" fill="#0080ff"/><rect x="418" y="332" width="1" height="1" fill="#0000ff"/><rect x="418" y="333" width="1" height="1" fill="#0000b4"/><rect x="437" y="318" width="1" height="1" fill="#00006e"/><rect x="437" y="321" width="1" height="1" fill="#0080ff"/><rect x="437" y="322" width="1" height="2" fill="#00ff80"/><rect x="437" y="324" width="1" height="1" fill="#0000ff"/><rect x="449" y="323" width="1" height="1" fill="#00006e"/><rect x="458" y="323" width="1" height="2" fill="#0000ff"/><rect x="458" y="325" width="1" height="1" fill="#0000b4"/><rect x="461" y="325" width="1" height="1" fill="#0000b4"/><rect x="462" y="324" width="1" height="1" fill="#0000ff"/><rect x="462" y="325" width="1" height="1" fill="#0080ff"/><rect x="463" y="324" width="1" height="1" fill="#0000b4"/><rect x="463" y="325" width="1" height="1" fill="#0000ff"/><rect x="464" y="325" width="1" height="1" fill="#00ffff"/><rect x="465" y="325" width="1" height="1" fill="#00ff80"/><rect x="466" y="325" width="1" height="1" fill="#00ffff"/><rect x="473" y="323" width="1" height="1" fill="#00006e"/><rect x="476" y="320" width="1" height="1" fill="#00006e"/><rect x="476" y="321" width="1" height="1" fill="#0000b4"/><rect x="476" y="322" width="1" height="1" fill="#0000ff"/><rect x="476" y="323" width="1" height="1" fill="#0000b4"/><rect x="476" y="324" width="1" height="1" fill="#00006e"/><rect x="483" y="320" width="1" height="1" fill="#00006e"/><rect x="483" y="321" width="1" height="2" fill="#0000ff"/><rect x="483" y="323" width="1" height="1" fill="#ff8c00"/><rect x="483" y="324" width="1" height="1" fill="#ff0000"/><rect x="483" y="325" width="1" height="1" fill="#ffff00"/><rect x="483" y="326" width="1" height="1" fill="#00ff80"/><rect x="483" y="327" width="1" height="2" fill="#0000ff"/><rect x="483" y="329" width="1" height="1" fill="#00006e"/><rect x="484" y="321" width="1" height="1" fill="#00006e"/><rect x="496" y="323" width="1" height="1" fill="#00006e"/><rect x="506" y="326" width="1" height="1" fill="#00006e"/><rect x="513" y="324" width="1" height="1" fill="#00006e"/><rect x="528" y="317" width="1" height="1" fill="#00006e"/><rect x="528" y="318" width="1" height="1" fill="#0000b4"/><rect x="528" y="319" width="1" height="2" fill="#0000ff"/><rect x="528" y="321" width="1" height="1" fill="#ff8c00"/><rect x="528" y="322" width="1" height="1" fill="#ff0000"/><rect x="528" y="323" width="1" height="1" fill="#ffffff"/><rect x="528" y="324" width="1" height="1" fill="#00ffff"/><rect x="528" y="325" width="1" height="1" fill="#0000ff"/><rect x="528" y="326" width="1" height="1" fill="#0000b4"/><rect x="528" y="327" width="1" height="1" fill="#00006e"/><rect x="538" y="318" width="1" height="1" fill="#00006e"/><rect x="538" y="319" width="1" height="1" fill="#0000b4"/><rect x="538" y="320" width="1" height="1" fill="#00006e"/><rect x="538" y="323" width="1" height="1" fill="#00006e"/><rect x="538" y="324" width="1" height="1" fill="#0000b4"/><rect x="538" y="325" width="1" height="1" fill="#00006e"/><rect x="538" y="327" width="1" height="1" fill="#00006e"/><rect x="559" y="323" width="1" height="1" fill="#00006e"/><rect x="571" y="326" width="1" height="1" fill="#00006e"/><rect x="571" y="328" width="1" height="1" fill="#0000b4"/><rect x="571" y="329" width="1" height="1" fill="#0000ff"/><rect x="571" y="330" width="1" height="1" fill="#ff0000"/><rect x="571" y="331" width="1" height="1" fill="#00ff00"/><rect x="571" y="332" width="1" height="1" fill="#00ffff"/><rect x="571" y="333" width="1" height="1" fill="#0000ff"/><rect x="571" y="334" width="1" height="1" fill="#0000b4"/><rect x="575" y="326" width="1" height="1" fill="#0000ff"/><rect x="575" y="327" width="1" height="1" fill="#0000b4"/><rect x="576" y="325" width="1" height="1" fill="#00006e"/><rect x="578" y="323" width="1" height="1" fill="#00006e"/><rect x="584" y="326" width="1" height="1" fill="#00006e"/><rect x="586" y="323" width="1" height="1" fill="#00006e"/><rect x="586" y="324" width="1" height="2" fill="#0000ff"/><rect x="586" y="326" width="1" height="1" fill="#a0ff00"/><rect x="586" y="327" width="1" height="1" fill="#fd0078"/><rect x="586" y="328" width="1" height="1" fill="#0000b4"/><rect x="586" y="329" width="1" height="1" fill="#0000ff"/><rect x="586" y="330" width="1" height="1" fill="#00006e"/><rect x="589" y="328" width="1" height="2" fill="#0000ff"/><rect x="589" y="330" width="1" height="1" fill="#0000b4"/><rect x="589" y="331" width="1" height="1" fill="#00006e"/><rect x="596" y="321" width="1" height="1" fill="#00006e"/><rect x="596" y="322" width="1" height="1" fill="#0080ff"/><rect x="596" y="323" width="1" height="1" fill="#00ffff"/><rect x="596" y="324" width="1" height="1" fill="#0080ff"/><rect x="596" y="326" width="1" height="1" fill="#0000b4"/><rect x="600" y="322" width="1" height="1" fill="#00006e"/><rect x="605" y="324" width="1" height="1" fill="#0000b4"/><rect x="609" y="325" width="1" height="1" fill="#00006e"/>
</g>
<g opacity="0.999">
<text class="s" x="9.8" y="12.8" font-size="14" style="fill:#00ff00;stroke:#000;stroke-width:0.24px;word-spacing:5.8px" xml:space="preserve">H R O F F T</text>
<text class="s" x="124.5" y="12.7" font-size="11.5" style="fill:#00ff00;letter-spacing:-0.9px">1.0.0</text>
<text class="m" transform="translate(9.5 30.6) scale(0.7692 1)" xml:space="preserve">0410021330.png</text>
<text class="m" transform="translate(9.5 49.5) scale(0.7692 1)" xml:space="preserve">04.10.02 13:30</text>
<text class="m" transform="translate(124.5 34.8) scale(0.7692 1)" xml:space="preserve">meteor</text>
<text class="m" transform="translate(139.2 49.5) scale(0.7692 1)" xml:space="preserve">9</text>
<text class="m" transform="translate(179.5 14.7) scale(0.7692 1)" xml:space="preserve">Observer           : Masayuki Kobayashi</text>
<text class="m" transform="translate(179.5 26.799999999999997) scale(0.7692 1)" xml:space="preserve">Receiving Location : Ogata-vill. Akita-Pref. JAPAN (139.96E, 40.02N)</text>
<text class="m" transform="translate(179.5 38.9) scale(0.7692 1)" xml:space="preserve">Receiver           : ICOM IC-575 53.7492(@LCD)MHz USB</text>
<text class="m" transform="translate(179.5 51.0) scale(0.7692 1)" xml:space="preserve">Receiving antenna  : A504HB(yagi 4el)</text>
<text class="m" transform="translate(56.6 89.5) scale(0.7692 1)" xml:space="preserve">1331</text>
<text class="m" transform="translate(116.6 89.5) scale(0.7692 1)" xml:space="preserve">1332</text>
<text class="m" transform="translate(176.6 89.5) scale(0.7692 1)" xml:space="preserve">1333</text>
<text class="m" transform="translate(236.6 89.5) scale(0.7692 1)" xml:space="preserve">1334</text>
<text class="m" transform="translate(295.6 89.5) scale(0.7692 1)" xml:space="preserve">1335</text>
<text class="m" transform="translate(355.6 89.5) scale(0.7692 1)" xml:space="preserve">1336</text>
<text class="m" transform="translate(415.6 89.5) scale(0.7692 1)" xml:space="preserve">1337</text>
<text class="m" transform="translate(475.6 89.5) scale(0.7692 1)" xml:space="preserve">1338</text>
<text class="m" transform="translate(535.6 89.5) scale(0.7692 1)" xml:space="preserve">1339</text>
<text class="m" transform="translate(595.6 89.5) scale(0.7692 1)" xml:space="preserve">1340</text>
<text class="s" x="-0.5" y="85" font-size="12" style="letter-spacing:-0.6px">kHz</text>
<text class="s" x="12.9" y="134" font-size="12" text-anchor="end" style="letter-spacing:-1px">1.1</text>
<text class="s" x="12.9" y="184" font-size="12" text-anchor="end" style="letter-spacing:-1px">1.0</text>
<text class="s" x="12.9" y="234" font-size="12" text-anchor="end" style="letter-spacing:-1px">0.9</text>
<text class="s" x="12.9" y="284" font-size="12" text-anchor="end" style="letter-spacing:-1px">0.8</text>
<text class="s" x="12.9" y="334" font-size="12" text-anchor="end" style="letter-spacing:-1px">0.7</text>
<text class="s" x="12.9" y="384" font-size="12" text-anchor="end" style="letter-spacing:-1px">0.6</text>
</g>
</svg>
</body></html>
